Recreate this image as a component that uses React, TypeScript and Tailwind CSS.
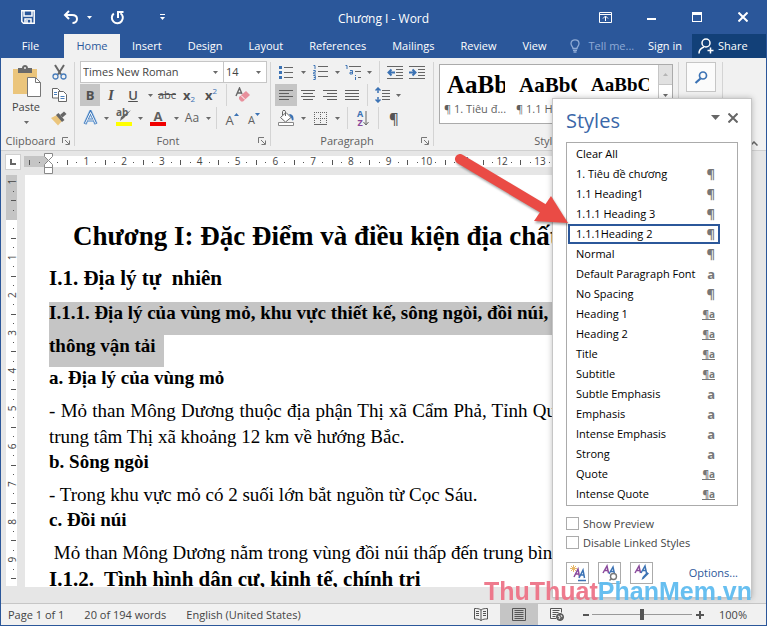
import React from 'react';
import clsx from 'clsx';

interface IStyleRow {
  name: string;
  kind?: 'paragraph' | 'character' | 'linked';
}

const TABS = ['Insert', 'Design', 'Layout', 'References', 'Mailings', 'Review', 'View'];

const STYLE_ROWS: IStyleRow[] = [
  { name: 'Clear All' },
  { name: '1. Tiêu đề chương', kind: 'paragraph' },
  { name: '1.1 Heading1', kind: 'paragraph' },
  { name: '1.1.1 Heading 3', kind: 'paragraph' },
  { name: '1.1.1Heading 2', kind: 'paragraph' },
  { name: 'Normal', kind: 'paragraph' },
  { name: 'Default Paragraph Font', kind: 'character' },
  { name: 'No Spacing', kind: 'paragraph' },
  { name: 'Heading 1', kind: 'linked' },
  { name: 'Heading 2', kind: 'linked' },
  { name: 'Title', kind: 'linked' },
  { name: 'Subtitle', kind: 'linked' },
  { name: 'Subtle Emphasis', kind: 'character' },
  { name: 'Emphasis', kind: 'character' },
  { name: 'Intense Emphasis', kind: 'character' },
  { name: 'Strong', kind: 'character' },
  { name: 'Quote', kind: 'linked' },
  { name: 'Intense Quote', kind: 'linked' },
];

const CM = 37.8;

function Caret({ className = 'fill-[#6a6a6a]' }: { className?: string }) {
  return (
    <svg width="5" height="3" viewBox="0 0 5 3" className={className} aria-hidden="true">
      <path d="M0 0h5L2.5 3z" />
    </svg>
  );
}

interface IToolProps {
  label: string;
  size?: string;
  active?: boolean;
  children: React.ReactNode;
}

function Tool({ label, size = 'w-[22px]', active, children }: IToolProps) {
  return (
    <button
      aria-label={label}
      className={clsx('flex h-[22px] shrink-0 items-center justify-center', size, active && 'bg-[#c5c5c5]')}
    >
      {children}
    </button>
  );
}

function DropTool({ label, size = 'w-3' }: { label: string; size?: string }) {
  return (
    <Tool label={label} size={size}>
      <Caret />
    </Tool>
  );
}

const Sep = () => <span className="mx-1 h-[22px] w-px shrink-0 bg-[#d4d4d4]" />;

function Lines({ rows }: { rows: number[][] }) {
  return (
    <svg width="15" height="13" viewBox="0 0 15 13" className="fill-[#5f5f5f]" aria-hidden="true">
      {rows.map(([x, w], i) => (
        <rect key={i} x={x} y={i * 3 + 1} width={w} height="1" />
      ))}
    </svg>
  );
}

function Launcher() {
  return (
    <button aria-label="More options" className="flex h-3 w-3 items-center justify-center">
      <svg width="8" height="8" viewBox="0 0 8 8" fill="none" stroke="#777" aria-hidden="true">
        <path d="M.5 6V.5H6M3 3l4 4M7.5 3.5v4h-4" />
      </svg>
    </button>
  );
}

interface IGroupProps {
  title: string;
  size: string;
  launcher?: boolean;
  children: React.ReactNode;
}

function Group({ title, size, launcher = true, children }: IGroupProps) {
  return (
    <section className={clsx('flex shrink-0 flex-col pt-[3px]', size)}>
      <div className="flex h-[72px] flex-col gap-px">{children}</div>
      <div className="flex h-4 items-center pr-0.5">
        <h2 className="flex-1 text-center text-[#5f5f5f]">{title}</h2>
        {launcher && <Launcher />}
      </div>
    </section>
  );
}

const GroupLine = () => <span className="my-1 w-px shrink-0 bg-[#d4d4d4]" />;

function TitleBar() {
  return (
    <header className="flex h-[34px] shrink-0 items-center text-white">
      <div className="flex flex-1 items-center">
        <button aria-label="Save" className="ml-5">
          <svg width="14" height="14" viewBox="0 0 14 14" fill="none" stroke="#fff" strokeWidth="1.5" aria-hidden="true">
            <path d="M.8.8h12.4v12.4H2.5L.8 11.5zM3 1v5h8V1M4 13V9h6v4M6 10v3" />
          </svg>
        </button>
        <button aria-label="Undo" className="ml-7">
          <svg width="16" height="14" viewBox="0 0 16 14" fill="none" stroke="#fff" strokeWidth="2" aria-hidden="true">
            <path d="M6 1L2 5l4 4M2.5 5H9c3 0 5 1.600 5 4s-2 4-4.500 4" />
          </svg>
        </button>
        <button aria-label="Undo history" className="ml-2">
          <Caret className="fill-white" />
        </button>
        <button aria-label="Repeat" className="ml-[18px]">
          <svg width="15" height="15" viewBox="0 0 15 15" fill="none" stroke="#fff" strokeWidth="2" aria-hidden="true">
            <path d="M3.800 3.500A5.500 5.500 0 1 0 10.500 3.200M8 8V2H13.500" />
          </svg>
        </button>
        <button aria-label="Customize toolbar" className="ml-[35px] flex flex-col items-center gap-0.5">
          <span className="h-px w-[5px] bg-white" />
          <Caret className="fill-white" />
        </button>
      </div>
      <h1 className="pt-1 text-[12px]">Chương I - Word</h1>
      <div className="flex flex-1 justify-end">
        <button aria-label="Ribbon display options" className="flex h-8 w-[46px] items-center justify-center">
          <svg width="13" height="11" viewBox="0 0 13 11" fill="none" stroke="#fff" aria-hidden="true">
            <path d="M.5.5h12v10H.5zM.5 2.500h12M6.500 9V4.500M4 6.500L6.500 4 9 6.500" />
          </svg>
        </button>
        <button aria-label="Minimize" className="flex h-8 w-[46px] items-center justify-center">
          <span className="mt-1 h-0.5 w-[9px] bg-white" />
        </button>
        <button aria-label="Maximize" className="flex h-8 w-[46px] items-center justify-center">
          <span className="h-2.5 w-2.5 border border-t-3 border-white" />
        </button>
        <button aria-label="Close" className="flex h-8 w-[46px] items-center justify-center">
          <svg width="10" height="10" viewBox="0 0 10 10" stroke="#fff" strokeWidth="2" aria-hidden="true">
            <path d="M.5.5l9 9M9.500.5l-9 9" />
          </svg>
        </button>
      </div>
    </header>
  );
}

function Tabs() {
  return (
    <nav className="flex h-6 shrink-0 items-stretch text-white">
      <button className="w-[63px] pr-1">File</button>
      <button className="w-14 bg-[#f1f1f1] text-[#2b579a]">Home</button>
      <div className="flex gap-0.5">
        {TABS.map((t) => (
          <button key={t} className="px-3">
            {t}
          </button>
        ))}
      </div>
      <button className="ml-3 flex items-center gap-2 text-[#8fabd6]">
        <svg width="10" height="14" viewBox="0 0 10 14" fill="none" stroke="currentColor" strokeWidth="1.300" aria-hidden="true">
          <path d="M3 9.500C3 7.500 1 7 1 4.500 1 2.300 2.800.8 5 .8s4 1.500 4 3.700C9 7 7 7.500 7 9.500zM3 11.300h4M3.500 13h3" />
        </svg>
        Tell me...
      </button>
      <button className="ml-auto px-2.5">Sign in</button>
      <button className="flex w-[74px] items-center gap-1 bg-[#124078] pl-1.5">
        <svg width="16" height="16" viewBox="0 0 16 16" fill="none" stroke="#fff" strokeWidth="1.500" aria-hidden="true">
          <circle cx="8" cy="5" r="4" />
          <path d="M1 15.500c0-3.500 2-5.500 5-6.500M12.500 9.500v6M9.500 12.500h6" />
        </svg>
        Share
      </button>
    </nav>
  );
}

function ClipboardGroup() {
  return (
    <Group title="Clipboard" size="w-[73px]">
      <div className="flex h-full">
        <button className="flex w-[50px] flex-col items-center text-[#444]">
          <svg width="30" height="32" viewBox="0 0 30 32" className="mt-1" aria-hidden="true">
            <path d="M2 4h24v25H2z" fill="#ebc57c" />
            <path d="M7 3h4c0-4 6-4 6 0h4v5H7z" fill="#6a6a6a" />
            <circle cx="14" cy="3" r="1" fill="#f1f1f1" />
            <path d="M16.500 12.500h8l5 5v14h-13z" fill="#fff" stroke="#777" />
            <path d="M24.500 12.500v5h5" fill="none" stroke="#777" />
          </svg>
          <span className="text-[11px] leading-5">Paste</span>
          <span className="mt-1">
            <Caret />
          </span>
        </button>
        <div className="flex flex-col gap-px">
          <Tool label="Cut" size="w-4">
            <svg width="15" height="16" viewBox="0 0 15 16" fill="none" aria-hidden="true">
              <path d="M3 1l6 9.500M12 1L6 10.500" stroke="#666" strokeWidth="2" />
              <circle cx="3.500" cy="12.500" r="2.500" stroke="#4a7ebb" strokeWidth="1.300" />
              <circle cx="11.500" cy="12.500" r="2.500" stroke="#4a7ebb" strokeWidth="1.300" />
            </svg>
          </Tool>
          <Tool label="Copy" size="w-4">
            <svg width="15" height="14" viewBox="0 0 15 14" fill="#fff" stroke="#666" aria-hidden="true">
              <path d="M.5.5h5l2.500 2.500v7H.5z" />
              <path d="M6.500 3.500h5l3 3v7h-8z" />
              <path d="M2 4.500h3M2 6.500h3M8.500 8.500h4M8.500 10.500h4" stroke="#4a7ebb" />
            </svg>
          </Tool>
          <Tool label="Format Painter" size="w-4">
            <svg width="16" height="15" viewBox="0 0 16 15" aria-hidden="true">
              <path d="M0 7l6-3 5 6-4 4.500z" fill="#ebc57c" />
              <path d="M5 4l2.500-2 6 7-2.500 2z" fill="#666" />
              <path d="M9 4l4-3.500L15.500 3l-4 3.500z" fill="#666" />
            </svg>
          </Tool>
        </div>
      </div>
    </Group>
  );
}

function FontGroup() {
  return (
    <Group title="Font" size="w-[195px] pl-[5px]">
      <div className="flex h-[22px]">
        <div className="relative w-36">
          <select
            aria-label="Font"
            className="h-[22px] w-full appearance-none border border-[#c6c6c6] bg-white pl-0.5 text-[11px] text-[#444]"
          >
            <option>Times New Roman</option>
          </select>
          <span className="pointer-events-none absolute top-2.5 right-1.5 flex">
            <Caret />
          </span>
        </div>
        <div className="relative -ml-px w-11">
          <select
            aria-label="Font size"
            className="h-[22px] w-full appearance-none border border-[#c6c6c6] bg-white pl-0.5 text-[11px] text-[#444]"
          >
            <option>14</option>
          </select>
          <span className="pointer-events-none absolute top-2.5 right-1.5 flex">
            <Caret />
          </span>
        </div>
      </div>
      <div className="flex text-[13px] text-[#505050]">
        <Tool label="Bold" size="w-5" active>
          <b>B</b>
        </Tool>
        <Tool label="Italic">
          <i className="font-['Liberation_Serif'] text-[15px] font-bold">I</i>
        </Tool>
        <Tool label="Underline">
          <u className="font-semibold">U</u>
        </Tool>
        <DropTool label="Underline style" />
        <Tool label="Strikethrough">
          <s className="text-[11px]">abc</s>
        </Tool>
        <Tool label="Subscript">
          <b>x</b>
          <span className="mt-2 text-[8px] text-[#3b72b4]">2</span>
        </Tool>
        <Tool label="Superscript">
          <b>x</b>
          <span className="mb-2 text-[8px] text-[#3b72b4]">2</span>
        </Tool>
        <Sep />
        <Tool label="Clear formatting" size="w-6">
          <svg width="16" height="16" viewBox="0 0 16 16" aria-hidden="true">
            <path d="M1 9l3.500-8L7 7M2.500 6H6" fill="none" stroke="#666" strokeWidth="1.400" />
            <path d="M4 10l7-6 4 4-7 6.500H6L4 12z" fill="#e8909c" />
            <path d="M6 8.500l4 4" stroke="#fff" />
          </svg>
        </Tool>
      </div>
      <div className="flex text-[14px] text-[#606060]">
        <Tool label="Text effects" size="w-5">
          <svg width="15" height="16" viewBox="0 0 15 16" fill="none" aria-hidden="true">
            <path d="M2 14L7.500 2 13 14M4.500 10h6" stroke="#b5d2f0" strokeWidth="4" />
            <path d="M2 14L7.500 2 13 14M4.500 10h6" stroke="#3f78b9" strokeWidth="2.600" />
            <path d="M2.300 13.500L7.500 2.500l5.200 11M4.500 10h6" stroke="#fff" strokeWidth="1" />
          </svg>
        </Tool>
        <DropTool label="Text effects menu" />
        <Tool label="Highlight" size="w-6">
          <span className="relative flex h-4 w-4 flex-col justify-end">
            <b className="absolute -top-1 left-0 text-[10px] leading-3">ab</b>
            <svg width="16" height="12" viewBox="0 0 16 12" aria-hidden="true">
              <path d="M15 0L8 8l-4 3 1-4z" fill="#666" />
            </svg>
            <span className="h-1 w-4 shrink-0 bg-[#ffff00]" />
          </span>
        </Tool>
        <DropTool label="Highlight color" size="w-2" />
        <Tool label="Font color" size="w-7">
          <span className="flex w-4 flex-col items-center">
            <b className="text-[13px] leading-3">A</b>
            <span className="h-1 w-4 bg-[#f00000]" />
          </span>
        </Tool>
        <DropTool label="Font color menu" size="w-2" />
        <Tool label="Change case" size="w-6">
          <span className="text-[12px]">Aa</span>
        </Tool>
        <DropTool label="Case menu" size="w-2" />
        <Sep />
        <Tool label="Grow font">
          <span className="mt-1 text-[13px]">A</span>
          <svg width="5" height="3" viewBox="0 0 5 3" className="mb-2 fill-[#3b72b4]" aria-hidden="true">
            <path d="M0 3h5L2.500 0z" />
          </svg>
        </Tool>
        <Tool label="Shrink font">
          <span className="mt-1 text-[11px]">A</span>
          <span className="mb-2">
            <Caret className="fill-[#3b72b4]" />
          </span>
        </Tool>
      </div>
    </Group>
  );
}

function ParagraphGroup() {
  return (
    <Group title="Paragraph" size="w-[162px] pl-1">
      <div className="flex">
        <Tool label="Bullets">
          <svg width="14" height="15" viewBox="0 0 14 15" aria-hidden="true">
            <path d="M5 2h9v1H5zM5 7h9v1H5zM5 12h9v1H5z" fill="#666" />
            <path d="M0 1h3v3H0zM0 6h3v3H0zM0 11h3v3H0z" fill="#3b72b4" />
          </svg>
        </Tool>
        <DropTool label="Bullet library" />
        <Tool label="Numbering">
          <svg width="15" height="16" viewBox="0 0 15 16" aria-hidden="true">
            <path d="M5 2h10v1H5zM5 7h10v1H5zM5 12h10v1H5z" fill="#666" />
            <path d="M.5 1.500H2V5M.3 6.500h2v1.800H.7v1.700H3M.3 11.500h2v4h-2M.8 13.500h1.500" fill="none" stroke="#3b72b4" />
          </svg>
        </Tool>
        <DropTool label="Numbering library" />
        <Tool label="Multilevel list" size="w-5">
          <svg width="17" height="16" viewBox="0 0 17 16" aria-hidden="true">
            <path d="M4 2h12v1H4zM10 7h6v1h-6zM13 13h3v1h-3z" fill="#666" />
            <path d="M.5 1.500H2V5M5 6.500h2.500v3.500H5V8.300h2.500M10.500 11v1M10.500 13v3" fill="none" stroke="#3b72b4" />
          </svg>
        </Tool>
        <DropTool label="Multilevel library" />
        <Sep />
        <Tool label="Decrease indent">
          <svg width="16" height="13" viewBox="0 0 16 13" aria-hidden="true">
            <path d="M0 0h16v1H0zM9 3h7v1H9zM9 6h7v1H9zM9 9h7v1H9zM0 12h16v1H0z" fill="#666" />
            <path d="M8 6.500H2M4.500 3.500L1.500 6.500l3 3" stroke="#3b72b4" strokeWidth="2" fill="none" />
          </svg>
        </Tool>
        <Tool label="Increase indent">
          <svg width="16" height="13" viewBox="0 0 16 13" aria-hidden="true">
            <path d="M0 0h16v1H0zM9 3h7v1H9zM9 6h7v1H9zM9 9h7v1H9zM0 12h16v1H0z" fill="#666" />
            <path d="M0 6.500h6M3.500 3.500l3 3-3 3" stroke="#3b72b4" strokeWidth="2" fill="none" />
          </svg>
        </Tool>
      </div>
      <div className="flex">
        <Tool label="Align left" active>
          <Lines rows={[[0, 14], [0, 10], [0, 14], [0, 10]]} />
        </Tool>
        <Tool label="Center">
          <Lines rows={[[0, 14], [2, 10], [0, 14], [2, 10]]} />
        </Tool>
        <Tool label="Align right">
          <Lines rows={[[0, 14], [4, 10], [0, 14], [4, 10]]} />
        </Tool>
        <Tool label="Justify">
          <Lines rows={[[0, 14], [0, 14], [0, 14], [0, 14]]} />
        </Tool>
        <Sep />
        <Tool label="Line spacing" size="w-5">
          <svg width="15" height="16" viewBox="0 0 15 16" aria-hidden="true">
            <path d="M7 3h8v1H7zM7 6h8v1H7zM7 9h8v1H7zM7 12h8v1H7z" fill="#666" />
            <path d="M3 1v5M3 10v5M.5 3.500L3 1l2.500 2.500M.5 12.500L3 15l2.500-2.500" fill="none" stroke="#3b72b4" strokeWidth="1.500" />
          </svg>
        </Tool>
        <DropTool label="Line spacing menu" />
      </div>
      <div className="flex">
        <Tool label="Shading">
          <svg width="17" height="16" viewBox="0 0 17 16" aria-hidden="true">
            <path d="M2.500 7.500l5.500-5 5 5-5.500 4.500z" fill="#fff" stroke="#666" />
            <path d="M7.500 6V1.500c0-1.500-3-1.500-3 0V5" fill="none" stroke="#666" />
            <path d="M11 4c3 0 5 2 4.500 6-1 1-2 0-2-1.500z" fill="#3b72b4" />
            <path d="M.5 12.500h15v3H.5z" fill="#fff" stroke="#888" />
          </svg>
        </Tool>
        <DropTool label="Shading color" />
        <Tool label="Borders">
          <svg width="13" height="13" viewBox="0 0 13 13" fill="none" stroke="#666" aria-hidden="true">
            <path d="M0 .5h13M0 6.500h13M.5 0v13M6.500 0v13M12.500 0v13" strokeDasharray="1 1" />
            <path d="M0 12.500h13" />
          </svg>
        </Tool>
        <DropTool label="Border menu" />
        <Sep />
        <Tool label="Sort">
          <span className="flex flex-col text-[9px] leading-[9px] font-bold">
            <span className="text-[#3b72b4]">A</span>
            <span className="text-[#8a4a9c]">Z</span>
          </span>
          <svg width="6" height="15" viewBox="0 0 6 15" fill="none" stroke="#666" aria-hidden="true">
            <path d="M3 0v14M.5 11L3 14l2.500-3" />
          </svg>
        </Tool>
        <Sep />
        <Tool label="Show marks">
          <span className="text-[15px] font-semibold text-[#555]">¶</span>
        </Tool>
      </div>
    </Group>
  );
}

function GalleryItem({ sample, name, size }: { sample: string; name: string; size: string }) {
  return (
    <button className="flex w-[72px] flex-col overflow-hidden pr-1.5 pl-1 text-left whitespace-nowrap">
      <span className="block h-9 w-[61px] overflow-hidden pl-[3px]">
        <span className={clsx("font-['Liberation_Serif'] leading-10 font-bold text-black", size)}>{sample}</span>
      </span>
      <span className="text-[#5f5f5f]">{name}</span>
    </button>
  );
}

function Ribbon() {
  return (
    <div className="flex h-[92px] shrink-0 overflow-hidden bg-[#f1f1f1]">
      <ClipboardGroup />
      <GroupLine />
      <FontGroup />
      <GroupLine />
      <ParagraphGroup />
      <GroupLine />
      <Group title="Styles" size="w-[244px] px-[5px]">
        <div className="mt-[3px] flex h-[60px] border border-[#ababab] bg-white">
          <GalleryItem sample="AaBb" name="¶ 1. Tiêu đ..." size="text-[25px]" />
          <GalleryItem sample="AaBbC" name="¶ 1.1 Hea..." size="text-[21px]" />
          <GalleryItem sample="AaBbC" name="¶ 1.1.1 H..." size="text-[19px]" />
          <div className="ml-auto flex w-3.5 flex-col border-l border-[#c6c6c6]">
            <button aria-label="Scroll up" className="flex h-5 items-center justify-center border-b border-[#c6c6c6] bg-[#e1e1e1]">
              <Caret className="rotate-180 fill-[#b5b5b5]" />
            </button>
            <button aria-label="Scroll down" className="flex h-5 items-center justify-center">
              <Caret />
            </button>
          </div>
        </div>
      </Group>
      <GroupLine />
      <div className="flex w-[43px] shrink-0 justify-center pt-1">
        <button aria-label="Editing" className="flex h-[30px] w-[30px] items-center justify-center border border-[#c6c6c6] bg-[#fbfbfb]">
          <svg width="14" height="13" viewBox="0 0 14 13" fill="none" stroke="#3b72b4" aria-hidden="true">
            <circle cx="9" cy="4.500" r="3.500" strokeWidth="1.700" />
            <path d="M6.500 7.500l-5 4.500" strokeWidth="2.200" />
          </svg>
        </button>
      </div>
      <GroupLine />
      <button aria-label="Collapse ribbon" className="mt-auto mr-2 mb-1 ml-auto">
        <svg width="8" height="5" viewBox="0 0 8 5" fill="none" stroke="#666" strokeWidth="1.500" aria-hidden="true">
          <path d="M.5 4.500L4 1l3.500 3.500" />
        </svg>
      </button>
    </div>
  );
}

function HorizontalRuler() {
  const quarters = Array.from({ length: 62 }, (_, i) => i - 2).filter((i) => i !== 0);
  return (
    <div className="relative flex h-6 shrink-0 bg-[#e6e6e6]">
      <div className="flex w-[23px] justify-center pt-[3px]">
        <button aria-label="Tab stop" className="flex h-4 w-4 items-center justify-center border border-[#d0d0d0] bg-white">
          <span className="h-1.5 w-1.5 border-b-2 border-l-2 border-[#666]" />
        </button>
      </div>
      <div className="mt-[5px] mr-4 h-[11px] flex-1 overflow-hidden bg-white">
        <svg width="720" height="11" aria-hidden="true">
          <rect width="24" height="11" fill="#c5c5c5" />
          {quarters.map((q) => {
            const x = 24.5 + (q * CM) / 4;
            if (q > 0 && q % 4 === 0) {
              return (
                <text key={q} x={x} y="9" textAnchor="middle" fontSize="10" fill="#444">
                  {q / 4}
                </text>
              );
            }
            return q % 2 === 0 ? (
              <rect key={q} x={Math.floor(x)} y="4" width="1" height="5" fill="#555" />
            ) : (
              <rect key={q} x={Math.floor(x)} y="6" width="1" height="1" fill="#555" />
            );
          })}
        </svg>
      </div>
      {/* first line / hanging / left indent handles sit on top of the scale */}
      <svg width="9" height="22" viewBox="0 0 9 22" className="absolute top-0.5 left-[43px]" fill="#fff" stroke="#888" aria-hidden="true">
        <path d="M.5.5h8v3l-4 4-4-4zM4.500 7.500l4 4v3h-8v-3zM.5 14.500h8v6h-8z" />
      </svg>
    </div>
  );
}

function VerticalRuler() {
  const quarters = Array.from({ length: 44 }, (_, i) => i - 4).filter((i) => i !== 0);
  return (
    <div className="w-6 shrink-0 overflow-hidden bg-[#e6e6e6] pl-[5px]">
      <svg width="11" height="411" aria-hidden="true">
        <rect width="11" height="411" fill="#fff" />
        <rect width="11" height="45" fill="#c5c5c5" />
        {quarters.map((q) => {
          const y = 44.5 + (q * CM) / 4;
          if (q % 4 === 0) {
            return (
              <text key={q} transform={`translate(10 ${y}) rotate(-90)`} textAnchor="middle" fontSize="10" fill="#444">
                {Math.abs(q / 4)}
              </text>
            );
          }
          return q % 2 === 0 ? (
            <rect key={q} x="5" y={Math.floor(y)} width="5" height="1" fill="#555" />
          ) : (
            <rect key={q} x="7" y={Math.floor(y)} width="1" height="1" fill="#555" />
          );
        })}
      </svg>
    </div>
  );
}

function Page() {
  return (
    <article className="mr-4 min-w-0 flex-1 overflow-hidden bg-white pt-[45px] pl-6 font-['Liberation_Serif',serif] text-[19px] leading-[22px] whitespace-pre text-black">
      <h1 className="pl-6 text-[27px] leading-8 font-bold">Chương I: Đặc Điểm và điều kiện địa chất</h1>
      <h2 className="mt-2.5 mb-2 text-[21px] leading-8 font-bold">I.1. Địa lý tự  nhiên</h2>
      <h3 className="font-bold">
        <span className="block bg-[#c5c5c5] pb-[11px]">I.1.1. Địa lý của vùng mỏ, khu vực thiết kế, sông ngòi, đồi núi, h</span>
        <span className="block w-fit bg-[#c5c5c5] pr-2 pb-2.5">thông vận tải</span>
      </h3>
      <h4 className="font-bold">a. Địa lý của vùng mỏ</h4>
      <div className="mt-[9px] mb-px w-[507px] leading-[26px]">
        <p className="text-justify whitespace-normal [text-align-last:justify]">
          - Mỏ than Mông Dương thuộc địa phận Thị xã Cẩm Phả, Tỉnh Qu
        </p>
        <p>trung tâm Thị xã khoảng 12 km về hướng Bắc.</p>
      </div>
      <h4 className="font-bold">b. Sông ngòi</h4>
      <p className="mt-[9px] mb-px leading-[26px]">- Trong khu vực mỏ có 2 suối lớn bắt nguồn từ Cọc Sáu.</p>
      <h4 className="font-bold">c. Đồi núi</h4>
      <p className="mt-[9px] mb-px leading-[26px]"> Mỏ than Mông Dương nằm trong vùng đồi núi thấp đến trung bình,</p>
      <h2 className="text-[21px] leading-6 font-bold">I.1.2.  Tình hình dân cư, kinh tế, chính trị</h2>
    </article>
  );
}

function KindMark({ kind }: { kind?: IStyleRow['kind'] }) {
  if (!kind) return null;
  if (kind === 'paragraph') return <span className="text-[13px] font-bold">¶</span>;
  if (kind === 'character') return <span className="text-[13px] font-bold">a</span>;
  return <span className="border-b border-[#777] text-[10px] leading-[10px] font-bold">¶a</span>;
}

function PaneButton({ label, children }: { label: string; children: React.ReactNode }) {
  return (
    <button aria-label={label} className="flex h-[22px] w-[23px] items-center justify-center border border-[#ababab]">
      <svg width="18" height="18" viewBox="0 0 18 18" fill="none" aria-hidden="true">
        {children}
      </svg>
    </button>
  );
}

function StylesPane() {
  return (
    <aside className="absolute top-[98px] right-[14px] h-[500px] w-[200px] border border-[#c6c6c6] bg-white px-[13px] shadow-[0_0_6px_rgba(0,0,0,0.25)]">
      <div className="flex h-[43px] items-center text-[#3a67a9]">
        <h2 className="flex-1 text-[20px]">Styles</h2>
        <button aria-label="Pane options" className="mr-2 mb-1.5">
          <svg width="9" height="5" viewBox="0 0 9 5" fill="#666" aria-hidden="true">
            <path d="M0 0h9L4.500 5z" />
          </svg>
        </button>
        <button aria-label="Close pane" className="mb-1.5">
          <svg width="10" height="10" viewBox="0 0 10 10" stroke="#666" strokeWidth="2" aria-hidden="true">
            <path d="M.5.5l9 9M9.500.5l-9 9" />
          </svg>
        </button>
      </div>
      <ul className="w-[172px] border border-[#ababab] py-px pr-[17px] pl-px">
        {STYLE_ROWS.map(({ name, kind }) => (
          <li key={name}>
            <button
              className={clsx(
                'flex h-5 w-full items-center justify-between border-2 pr-[3px] pl-1.5 text-black',
                name === '1.1.1Heading 2' ? 'border-[#2b579a]' : 'border-transparent'
              )}
            >
              {name}
              <span className="flex text-[#777]">
                <KindMark kind={kind} />
              </span>
            </button>
          </li>
        ))}
      </ul>
      <div className="mt-2 flex flex-col text-[#444]">
        {['Show Preview', 'Disable Linked Styles'].map((text) => (
          <label key={text} className="flex h-[19px] items-center gap-1">
            <input type="checkbox" className="h-[13px] w-[13px] appearance-none border border-[#ababab] bg-white" />
            {text}
          </label>
        ))}
      </div>
      <div className="mt-2.5 flex items-center gap-[9px]">
        <PaneButton label="New style">
          <path d="M4.500 1v7M1 4.500h7M2 2l5 5M7 2L2 7" stroke="#e8b96a" />
          <path d="M5 13l4-8 1.500 8M7 10h3" stroke="#8a4a9c" strokeWidth="1.500" />
          <path d="M10 14l4-8 1.500 8M12 11h3M9 16.500h8" stroke="#3b72b4" strokeWidth="1.500" />
        </PaneButton>
        <PaneButton label="Style inspector">
          <path d="M2 9l4-7 1.500 7M4 6.500h3" stroke="#8a4a9c" strokeWidth="1.500" />
          <path d="M8 10l4-7 1.500 7M10 7.500h3" stroke="#3b72b4" strokeWidth="1.500" />
          <circle cx="12.500" cy="12.500" r="3" fill="#fff" stroke="#777" strokeWidth="1.400" />
          <path d="M10.500 14.500l-2 2" stroke="#777" strokeWidth="1.500" />
        </PaneButton>
        <PaneButton label="Manage styles">
          <path d="M2 9l4-7 1.500 7M4 6.500h3" stroke="#8a4a9c" strokeWidth="1.500" />
          <path d="M8 9l4-7 1.500 7M10 6.500h3" stroke="#3b72b4" strokeWidth="1.500" />
          <path d="M16 9.500l-5 5-2.500 1.500 1-3 4.500-5z" fill="#3b72b4" />
        </PaneButton>
        <a href="#options" className="ml-auto text-[#2b579a]">
          Options...
        </a>
      </div>
      <svg
        width="124"
        height="84"
        viewBox="0 0 124 84"
        className="pointer-events-none absolute top-[46px] -left-[103px] drop-shadow-[1px_2px_1px_rgba(0,0,0,0.35)]"
        aria-hidden="true"
      >
        <path d="M10 14l84 50" stroke="#ea4b45" strokeWidth="10" strokeLinecap="round" />
        <path d="M101 51l17 27-34-2z" fill="#ea4b45" />
      </svg>
    </aside>
  );
}

function StatusBar() {
  return (
    <footer className="flex h-[22px] shrink-0 items-center border-t border-[#c6c6c6] bg-[#f1f1f1] pl-[7px] text-[#444]">
      <span>Page 1 of 1</span>
      <span className="ml-5">20 of 194 words</span>
      <span className="ml-5">English (United States)</span>
      <div className="ml-auto flex items-center">
        <button aria-label="Read mode" className="flex h-[21px] w-[38px] items-center justify-center">
          <svg width="14" height="13" viewBox="0 0 14 13" fill="none" stroke="#555" aria-hidden="true">
            <path d="M7 2v10.500M7 2C5 .5 3 .5.5.5V11C3 11 5 11 7 12.500M7 2C9 .5 11 .5 13.500.5V11c-2.500 0-4.500 0-6.500 1.500M2 3.500h3M2 5.500h3M2 7.500h3M9 3.500h3M9 5.500h3M9 7.500h3" />
          </svg>
        </button>
        <button aria-label="Print layout" className="flex h-[21px] w-[38px] items-center justify-center bg-[#c5c5c5]">
          <svg width="14" height="13" viewBox="0 0 14 13" fill="none" stroke="#555" aria-hidden="true">
            <path d="M.5.5h13v12H.5zM2.500 2.500h9M2.500 4.500h9M2.500 6.500h9M2.500 8.500h9M2.500 10.500h9" />
          </svg>
        </button>
        <button aria-label="Web layout" className="flex h-[21px] w-[38px] items-center justify-center">
          <svg width="14" height="13" viewBox="0 0 14 13" fill="none" stroke="#555" aria-hidden="true">
            <path d="M6 10.500H.5V.5h11v4M2.500 2.500h7M2.500 4.500h6M2.500 6.500h4M2.500 8.500h3" />
            <circle cx="10" cy="9" r="3.500" fill="#666" />
            <path d="M8 8l2 1-1 2M11 7l1 2" stroke="#eee" />
          </svg>
        </button>
        <button aria-label="Zoom out" className="ml-1 flex h-4 w-3 items-center justify-center">
          <span className="h-0.5 w-1.5 bg-[#555]" />
        </button>
        <input
          type="range"
          aria-label="Zoom"
          className="h-3 w-[100px] appearance-none bg-[linear-gradient(#999,#999)] bg-[length:100%_1px] bg-center bg-no-repeat [&::-webkit-slider-thumb]:h-[11px] [&::-webkit-slider-thumb]:w-1 [&::-webkit-slider-thumb]:appearance-none [&::-webkit-slider-thumb]:bg-[#555]"
        />
        <button aria-label="Zoom in" className="flex h-4 w-4 items-center justify-center">
          <svg width="8" height="8" viewBox="0 0 8 8" fill="#555" aria-hidden="true">
            <path d="M3 0h2v3h3v2H5v3H3V5H0V3h3z" />
          </svg>
        </button>
        <span className="mr-2 w-[50px] text-center">100%</span>
      </div>
    </footer>
  );
}

function App() {
  return (
    <div className="relative flex h-screen min-h-[560px] flex-col overflow-hidden border-x border-b border-[#2b579a] bg-[#2b579a] font-['Open_Sans',sans-serif] text-[11px] leading-4">
      <TitleBar />
      <Tabs />
      <Ribbon />
      <main className="flex min-h-0 flex-1 flex-col border-t border-[#d0d0d0] bg-[#e6e6e6]">
        <HorizontalRuler />
        <div className="mb-4 flex min-h-0 flex-1">
          <VerticalRuler />
          <Page />
        </div>
      </main>
      <StatusBar />
      <StylesPane />
      <p className="pointer-events-none absolute right-[14px] bottom-4 font-['Liberation_Sans',sans-serif] text-[25px] leading-9 font-bold text-[#ee7488] opacity-95">
        ThuThuat<span className="text-[#5fbcf0]">PhanMem.vn</span>
      </p>
    </div>
  );
}

export default App;
